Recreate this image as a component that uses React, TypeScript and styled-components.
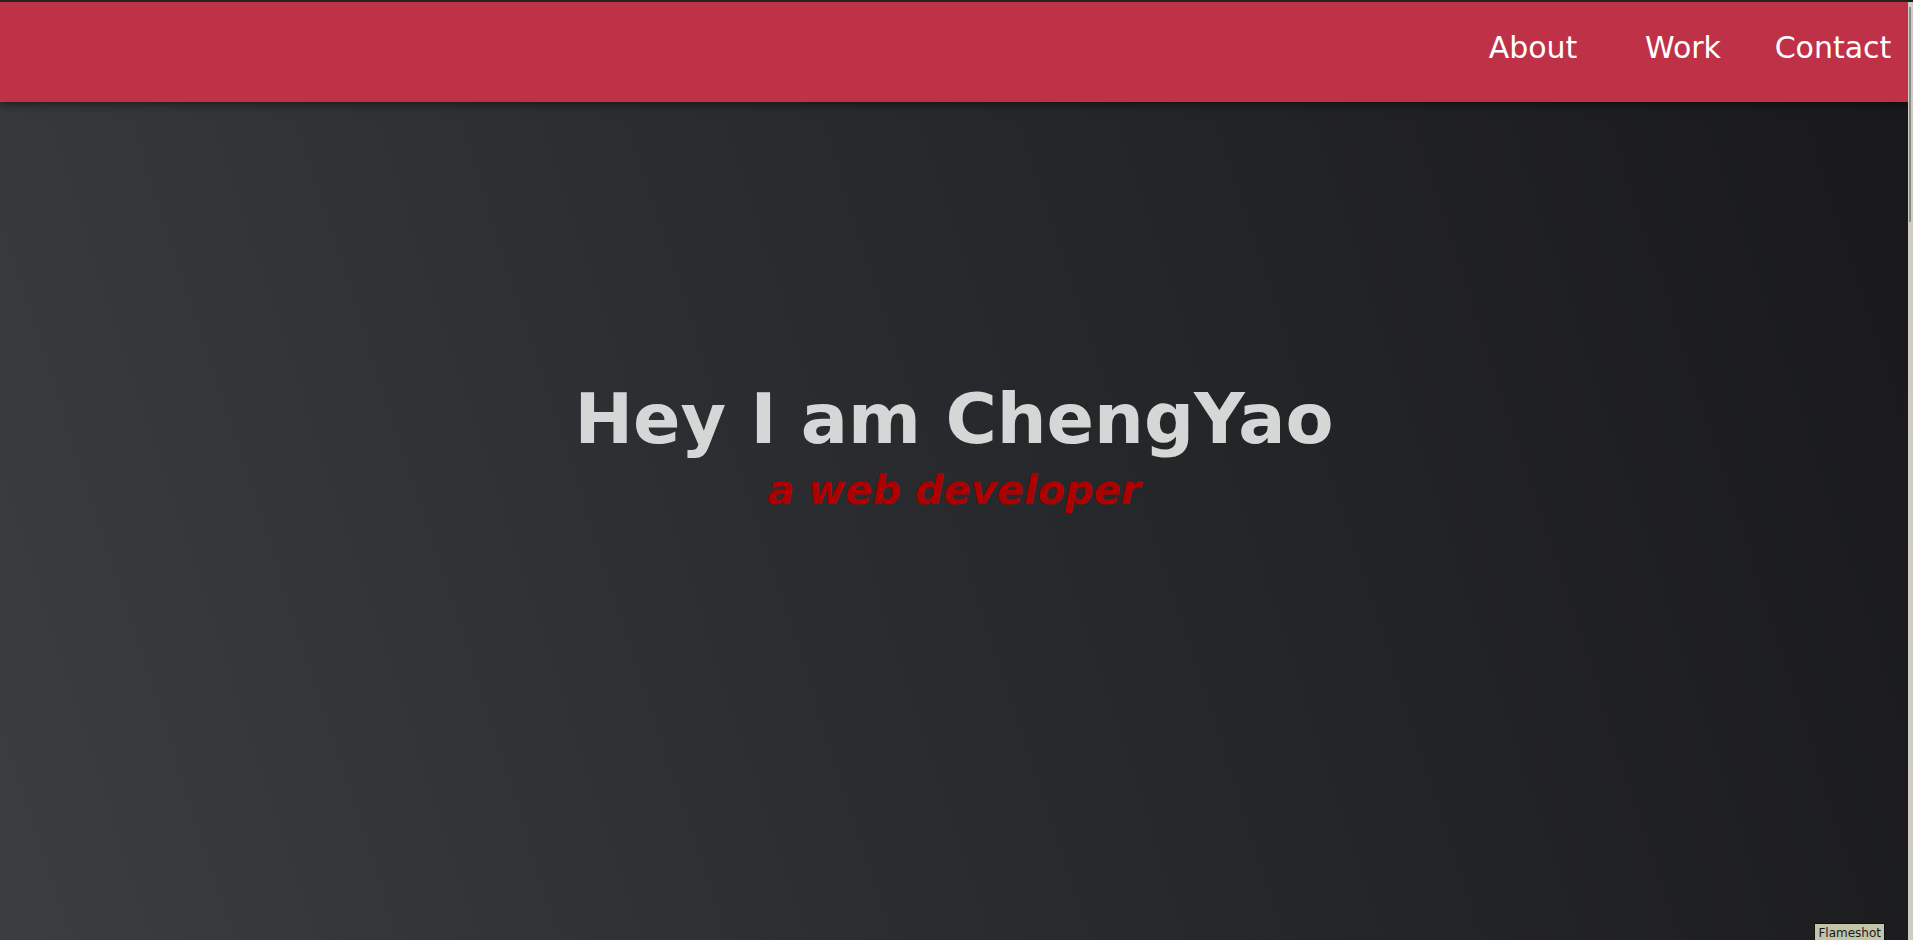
import styled, { createGlobalStyle } from "styled-components";

const GlobalStyle = createGlobalStyle`
  html::-webkit-scrollbar {
    display: none;
  }
  body {
    margin: 0 5px 0 0;
    font-family: "DejaVu Sans", Verdana, sans-serif;
    background: #1c1d1f;
  }
`;

const Header = styled.header`
  position: relative;
  z-index: 2;
  height: 100px;
  border-top: 2px solid #242424;
  background: #bf3147;
  box-shadow: 0 3px 8px rgba(0, 0, 0, 0.45);
  display: flex;
  justify-content: flex-end;
`;

const Nav = styled.nav`
  display: flex;
  padding-top: 28px;
`;

const NavLink = styled.a`
  width: 150px;
  text-align: center;
  color: #ffffff;
  font-size: 30px;
  line-height: 35px;
  height: 35px;
  text-decoration: none;
  cursor: pointer;
`;

const Hero = styled.section`
  position: relative;
  height: 838px;
  background: linear-gradient(72deg, #3b3e41 0%, #2b2d30 40%, #19191b 100%);
  display: flex;
  flex-direction: column;
  align-items: center;
  padding-top: 276px;
  box-sizing: border-box;
`;

const Title = styled.h1`
  margin: 0;
  color: #d5d6d6;
  font-size: 70px;
  font-weight: bold;
  line-height: 82px;
`;

const Subtitle = styled.h2`
  margin: 7px 0 0 0;
  color: #ad0000;
  font-size: 40px;
  font-weight: bold;
  font-style: italic;
  line-height: 47px;
`;

const Section = styled.section`
  min-height: 940px;
  background: #1c1d1f;
`;

const ScrollTrack = styled.div`
  position: fixed;
  top: 2px;
  right: 0;
  bottom: 0;
  width: 5px;
  background: #cfccc5;
  z-index: 6;
`;

const ScrollThumb = styled.div`
  margin: 5px 0 0 1px;
  width: 2px;
  height: 215px;
  background: #8b8b88;
`;

const ToolTag = styled.div`
  position: fixed;
  right: 28px;
  bottom: 0;
  height: 16px;
  padding: 0 3px;
  background: #c4c4a8;
  border: 1px solid #111;
  border-bottom: none;
  color: #1a1a1a;
  font-size: 12px;
  line-height: 18px;
  z-index: 5;
`;

const links = ["About", "Work", "Contact"];

const App = () => {
  return (
    <>
      <GlobalStyle />
      <Header>
        <Nav>
          {links.map((label) => (
            <NavLink key={label} href={`#${label.toLowerCase()}`}>
              {label}
            </NavLink>
          ))}
        </Nav>
      </Header>
      <Hero>
        <Title>Hey I am ChengYao</Title>
        <Subtitle>a web developer</Subtitle>
      </Hero>
      <Section id="about" />
      <Section id="work" />
      <Section id="contact" />
      <ScrollTrack>
        <ScrollThumb />
      </ScrollTrack>
      <ToolTag>Flameshot</ToolTag>
    </>
  );
};

export default App;
